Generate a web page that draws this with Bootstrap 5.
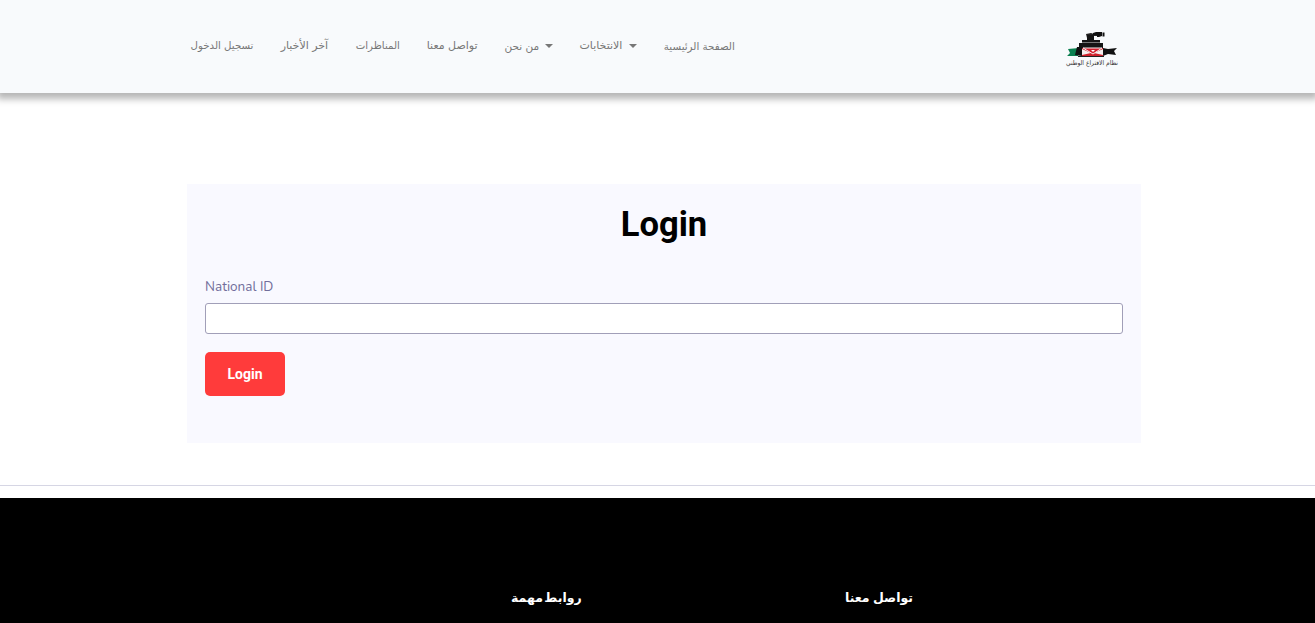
<!DOCTYPE html>
<html lang="ar">
<head>
<meta charset="utf-8">
<meta name="viewport" content="width=device-width, initial-scale=1">
<title>Login</title>
<link rel="stylesheet" href="https://cdn.jsdelivr.net/npm/bootstrap@5.3.0/dist/css/bootstrap.min.css">
<style>
body{font-family:Roboto,"DejaVu Sans",sans-serif;height:100vh;overflow:hidden;background:#fff}
.site-bar{height:93px;background:#f8fafc;box-shadow:0 3px 7px 3px rgba(0,0,0,.29)}
.site-inner{width:954px;margin-left:187px;padding:0 11px 0 4px}
.site-menu .nav{gap:26.4px}
.site-menu .nav-link{height:24px;padding:0;color:#777;font:11px/24px "DejaVu Sans",sans-serif;white-space:nowrap;margin-top:-2px;display:flex;align-items:center;justify-content:center}
.site-menu .dropdown-toggle{justify-content:space-between}
.site-menu .dropdown-toggle::after{margin:0;border-top:4px solid #777;border-right:4px solid transparent;border-left:4px solid transparent}
.site-menu .n1{width:71px;font-size:10.3px}
.site-menu .n2{width:58px}
.site-menu .n3{width:48.500px;font-size:10.5px}
.site-menu .n4{width:52px}
.site-menu .n5{width:44px;font-size:10.2px}
.site-menu .n6{width:50px}
.site-menu .n7{width:62px;font-size:10.2px}
.login-panel{width:954px;height:259px;margin:91px 0 0 187px;padding:18px;background:#f9f9ff}
.login-panel h1{font:700 34.6px/44px Roboto,sans-serif;color:#000;margin:0 0 31px}
.login-panel label{font:13.5px/20px Nunito,"Open Sans",sans-serif;color:#716e9b;margin-bottom:6px}
.login-panel .form-control{height:31px;border:1px solid #a19fb8;border-radius:3px}
.login-btn{width:80px;height:44px;margin-top:18px;background:#ff3b3b;color:#fff;border:0;border-radius:5px;font:700 14px/20px Roboto,sans-serif;padding:0}
.rule{height:1px;background:#d6d6e4;margin:42px 0 12px}
.site-footer{height:125px;background:#000;padding-top:88px}
.foot-grid{width:402px;margin-left:511px}
.foot-grid h2{font:700 12.5px/24px "DejaVu Sans",sans-serif;color:#fff;margin:0;white-space:nowrap;word-spacing:-1px}
.foot-grid h2:first-child{word-spacing:-3px}
</style>
</head>
<body>
<header class="site-bar d-flex align-items-center position-relative">
  <div class="site-inner d-flex justify-content-between align-items-center">
    <nav class="site-menu">
      <ul class="nav flex-nowrap" dir="rtl">
        <li><a class="nav-link n1" href="#">الصفحة الرئيسية</a></li>
        <li><a class="nav-link dropdown-toggle n2" dir="ltr" href="#">الانتخابات</a></li>
        <li><a class="nav-link dropdown-toggle n3" dir="ltr" href="#">من نحن</a></li>
        <li><a class="nav-link n4" href="#">تواصل معنا</a></li>
        <li><a class="nav-link n5" href="#">المناظرات</a></li>
        <li><a class="nav-link n6" href="#">آخر الأخبار</a></li>
        <li><a class="nav-link n7" href="#">تسجيل الدخول</a></li>
      </ul>
    </nav>
    <a class="pt-1" href="#" aria-label="نظام الاقتراع الوطني">
      <svg class="d-block" width="75" height="55" viewBox="0 0 75 55">
        <path d="M31 13l5-1 3 1h3v2h-4v2h-6z" fill="#222"/>
        <path d="M38 12l3-1h6v4l-3 1h-2v-2h-4z" fill="#111"/>
        <path d="M47.500 11.500h2v4h-2z" fill="#111"/>
        <path d="M32 14h7v6h-7zM27 19h18v2H27zM24 22h24v5H24z" fill="#151515"/>
        <path d="M27 21.500h18" stroke="#777"/>
        <path d="M13 28l11-1-1 8H12l3-3z" fill="#0b8050"/>
        <path d="M22 26h5v9l-7-1z" fill="#111"/>
        <path d="M27 27h21v8H27z" fill="#cf202b"/>
        <path d="M27 28v6l9-2zM48 28v6l-9-2z" fill="#f5eeee"/>
        <path d="M28 27h19l-9 6z" fill="#d51e2d" stroke="#f5eeee" stroke-width="1"/>
        <path d="M36 29h4l-2 2z" fill="#fff"/>
        <path d="M48 27l5 1 9-1-3 3 2 4-8-1-5 2z" fill="#111"/>
        <path d="M23 35.500h26" stroke="#222" fill="none"/>
        <text x="37" y="44" direction="rtl" text-anchor="middle" textLength="52" lengthAdjust="spacingAndGlyphs" font-family="DejaVu Sans" font-size="6.500" fill="#333">نظام الاقتراع الوطني</text>
      </svg>
    </a>
  </div>
</header>
<main>
  <section class="login-panel">
    <h1 class="text-center">Login</h1>
    <form>
      <label class="d-block" for="nid">National ID</label>
      <input class="form-control" id="nid" type="text">
      <button class="btn login-btn" type="button">Login</button>
    </form>
  </section>
</main>
<div class="rule"></div>
<footer class="site-footer">
  <div class="foot-grid d-flex justify-content-between">
    <h2>روابط مهمة</h2>
    <h2>تواصل معنا</h2>
  </div>
</footer>
<script src="https://cdn.jsdelivr.net/npm/bootstrap@5.3.0/dist/js/bootstrap.bundle.min.js"></script>
</body>
</html>
